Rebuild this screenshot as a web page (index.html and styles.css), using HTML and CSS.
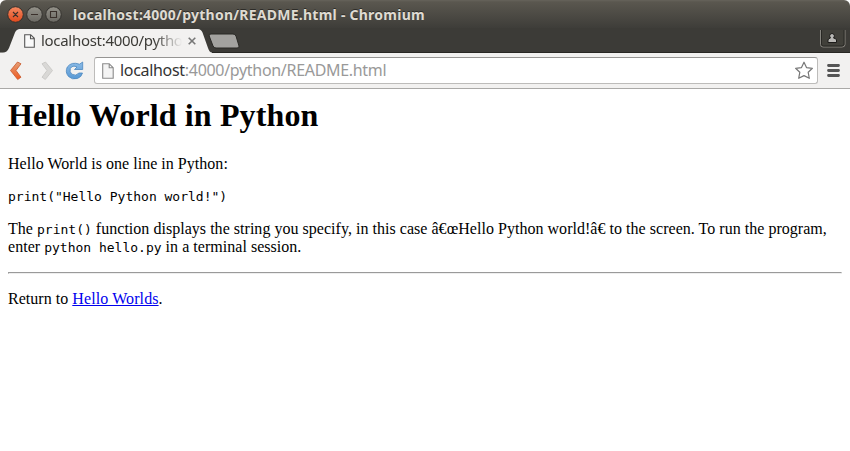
FILE: index.html
```html
<!DOCTYPE html>
<html lang="en">
<head>
<meta charset="utf-8">
<title>localhost:4000/python/README.html</title>
<link rel="stylesheet" href="styles.css">
</head>
<body>
<div class="frame">
  <header class="titlebar">
    <svg class="controls" width="58" height="20" viewBox="0 0 58 20">
      <defs>
        <linearGradient id="red" x1="0" y1="0" x2="0" y2="1"><stop offset="0" stop-color="#f58a62"/><stop offset="1" stop-color="#e0491c"/></linearGradient>
        <linearGradient id="gray" x1="0" y1="0" x2="0" y2="1"><stop offset="0" stop-color="#94928a"/><stop offset="1" stop-color="#6b6963"/></linearGradient>
      </defs>
      <g stroke="#33312d">
        <circle cx="10.5" cy="9.5" r="7.8" fill="url(#red)"/>
        <circle cx="29.5" cy="9.5" r="7.8" fill="url(#gray)"/>
        <circle cx="48.5" cy="9.5" r="7.8" fill="url(#gray)"/>
      </g>
      <g fill="none" stroke="#3a302b" stroke-width="1.1">
        <path d="M8 7l5 5M13 7l-5 5M26 9.500h7M45.500 6.500h6v6h-6z"/>
      </g>
    </svg>
    <span class="window-title">localhost:4000/python/README.html - Chromium</span>
  </header>
  <nav class="tabstrip">
    <div class="tab">
      <svg class="tab-shape" width="212" height="25" viewBox="0 0 212 25">
        <path d="M0 25V24.500H3Q7 24.500 9 20L15 4.500Q16.500 1 20 1H198Q201 1 202.500 4.500L208 20Q209.500 24.500 212 24.500V25Z" fill="#f2f1f0"/>
      </svg>
      <svg class="tab-page" width="11" height="14" viewBox="0 0 11 14"><path d="M.7.700h6L10.300 4.300v9H.7zM6.500.700v4h3.800" fill="#fafafa" stroke="#555" stroke-width="1.1"/></svg>
      <span class="tab-title">localhost:4000/python</span>
      <svg class="tab-close" width="8" height="8" viewBox="0 0 8 8"><path d="M.7.700l6.600 6.600M7.300.700L.7 7.300" stroke="#777" stroke-width="1.6"/></svg>
    </div>
    <svg class="new-tab" width="32" height="16" viewBox="0 0 32 16"><path d="M3 1H25Q27 1 28 3L31 13Q31.500 15 29 15H8Q6 15 5 13L1.200 3Q.5 1 3 1Z" fill="#a3a29f" stroke="#292825"/></svg>
    <svg class="profile" width="26" height="19" viewBox="0 0 26 19">
      <path d="M.5 1V15.500Q.5 18 3 18H22Q25 18 25 15.500V1" fill="#41403a" stroke="#85837d"/>
      <path d="M1.500 1V15Q1.500 17 3.500 17H22Q24 17 24 15V1" fill="none" stroke="#292824"/>
      <path d="M8 13.500V11Q8 9.500 10.500 9Q9.500 8 9.700 6.500Q10 4.500 12 4.500T14.300 6.500Q14.500 8 13.500 9Q16.500 9.500 16.500 11V13.500Z" fill="#b9b8b5" stroke="#1c1b19"/>
    </svg>
  </nav>
  <div class="toolbar">
    <svg class="nav-icons" width="84" height="24" viewBox="0 0 84 24">
      <defs>
        <linearGradient id="back" x1="0" y1="0" x2="0" y2="1"><stop offset="0" stop-color="#e5a078"/><stop offset="1" stop-color="#ee5a20"/></linearGradient>
        <linearGradient id="reload" x1="0" y1="0" x2="0" y2="1"><stop offset="0" stop-color="#8bbbe6"/><stop offset="1" stop-color="#5899d5"/></linearGradient>
      </defs>
      <path d="M17.500 3L21 4.800L16 11.500L21 18.200L17.700 20.500L10.500 11.500Z" fill="url(#back)" stroke="#c9592c" stroke-width=".8" stroke-linejoin="round"/>
      <path d="M45.500 3L42 4.800L47 11.500L42 18.200L45.300 20.500L52.500 11.500Z" fill="#d9d8d6" stroke="#c6c5c3" stroke-width=".8" stroke-linejoin="round"/>
      <path d="M79.500 5.200L82.700 3V10.500H74.500L77 8Q72.500 5.800 70.300 9.500Q69.300 13 71.800 15.200Q76 17.600 79 14H82.500Q81.500 18 77.500 19.500Q72 21 68.500 17.500Q64.800 13 67.300 8Q71.500 2.300 79.500 5.200Z" fill="url(#reload)" stroke="#4d88bf" stroke-width=".8" stroke-linejoin="round"/>
    </svg>
    <div class="omnibox">
      <svg class="url-page" width="12" height="16" viewBox="0 0 12 16"><path d="M.7.700h6.500l4 4.100v10.400H.7zM7.200.700v4.100h4" fill="#f4f4f4" stroke="#8a8a8a" stroke-width="1.1"/></svg>
      <span class="url"><span class="host">localhost</span><span class="path">:4000/python/README.html</span></span>
      <svg class="star" width="20" height="19" viewBox="0 0 20 19"><path d="M10 1.200L12.500 6.600L18.400 7.300L14.200 11.300L15.300 17.300L10 14.600L4.700 17.300L5.800 11.300L1.600 7.300L7.500 6.600Z" fill="#fff" stroke="#777" stroke-width="1.2" stroke-linejoin="round"/></svg>
    </div>
    <svg class="menu" width="13" height="13" viewBox="0 0 13 13"><path d="M1.500 1.500h10M1.500 6.500h10M1.500 11.500h10" stroke="#555" stroke-width="2.800" stroke-linecap="round"/></svg>
  </div>
  <main class="page">
    <h1>Hello World in Python</h1>
    <p>Hello World is one line in Python:</p>
    <pre><code>print("Hello Python world!")</code></pre>
    <p>The <code>print()</code> function displays the string you specify, in this case â€œHello Python world!â€ to the screen. To run the program,<br>enter <code>python hello.py</code> in a terminal session.</p>
    <hr>
    <p>Return to <a href="#">Hello Worlds</a>.</p>
  </main>
</div>
</body>
</html>
```
FILE: styles.css
```css
* { box-sizing: border-box; }
body { margin: 0; background: #fff; overflow: hidden; }
svg { display: block; flex: none; }
.frame {
  display: flex;
  flex-direction: column;
  height: 451px;
  border-radius: 6px 6px 0 0;
  overflow: hidden;
}
.titlebar {
  display: flex;
  height: 28px;
  flex: none;
  padding: 5px 0 0 5px;
  background: linear-gradient(#66635b 0, #5a574f 2px, #3e3d39 100%);
  font-family: "Noto Sans", sans-serif;
}
.window-title {
  margin: -1px 0 0 10px;
  font-size: 14px;
  line-height: 22px;
  font-weight: 700;
  letter-spacing: .25px;
  color: #dfdbd2;
  text-shadow: 0 -1px #2d2c28;
  white-space: nowrap;
}
.tabstrip {
  display: flex;
  height: 25px;
  flex: none;
  background: #3c3b37;
  border-bottom: 1px solid #282723;
}
.tab {
  position: relative;
  display: flex;
  align-items: center;
  width: 212px;
  height: 25px;
  flex: none;
  padding-left: 24px;
  font-family: "Noto Sans", sans-serif;
}
.tab-shape { position: absolute; left: 0; top: 0; }
.tab-page, .tab-title, .tab-close { position: relative; }
.tab-title {
  width: 141px;
  margin: -2px 0 0 6px;
  overflow: hidden;
  white-space: nowrap;
  font-size: 15px;
  line-height: 24px;
  letter-spacing: -.3px;
  color: #3c3b37;
  -webkit-mask-image: linear-gradient(to right, #000 113px, transparent 141px);
  mask-image: linear-gradient(to right, #000 113px, transparent 141px);
}
.tab-close { margin-left: 6px; }
.new-tab { margin: 5px 0 0 -4px; }
.profile { margin: 1px 4px 0 auto; }
.toolbar {
  display: flex;
  align-items: center;
  height: 36px;
  flex: none;
  padding-right: 10px;
  background: #f2f1f0;
  border-bottom: 1px solid #aaa9a7;
}
.omnibox {
  display: flex;
  align-items: center;
  flex: 1;
  height: 27px;
  margin: 0 9px 0 10px;
  padding: 0 3px 0 7px;
  background: #fff;
  border: 1px solid #bdbcba;
  border-top-color: #969593;
  border-radius: 3px;
}
.url {
  flex: 1;
  margin: -2px 0 0 6px;
  font-family: "Noto Sans", sans-serif;
  font-size: 16px;
  line-height: 24px;
  letter-spacing: -.31px;
  white-space: nowrap;
}
.host { color: #333; }
.path { color: #999; }
.page {
  flex: 1;
  padding: 8px;
  font: 16px/18px "Liberation Serif", serif;
  letter-spacing: .03px;
  color: #000;
}
h1 { margin: 0 0 21px; font-size: 32px; line-height: 37px; letter-spacing: .12px; }
p { margin: 0 0 16px; }
pre { margin: -1px 0 16px; line-height: 15px; }
code { font-family: "DejaVu Sans Mono", monospace; font-size: 13px; line-height: 15px; letter-spacing: 0; }
pre { margin-top: 15px; }
p:has(+ pre) { margin-bottom: 15px; }
hr { height: 2px; margin: 0 0 16px; border: 1px solid; border-color: #9a9a9a #eee #eee #9a9a9a; }
a { color: #00e; text-decoration: underline; letter-spacing: .1px; }
```
